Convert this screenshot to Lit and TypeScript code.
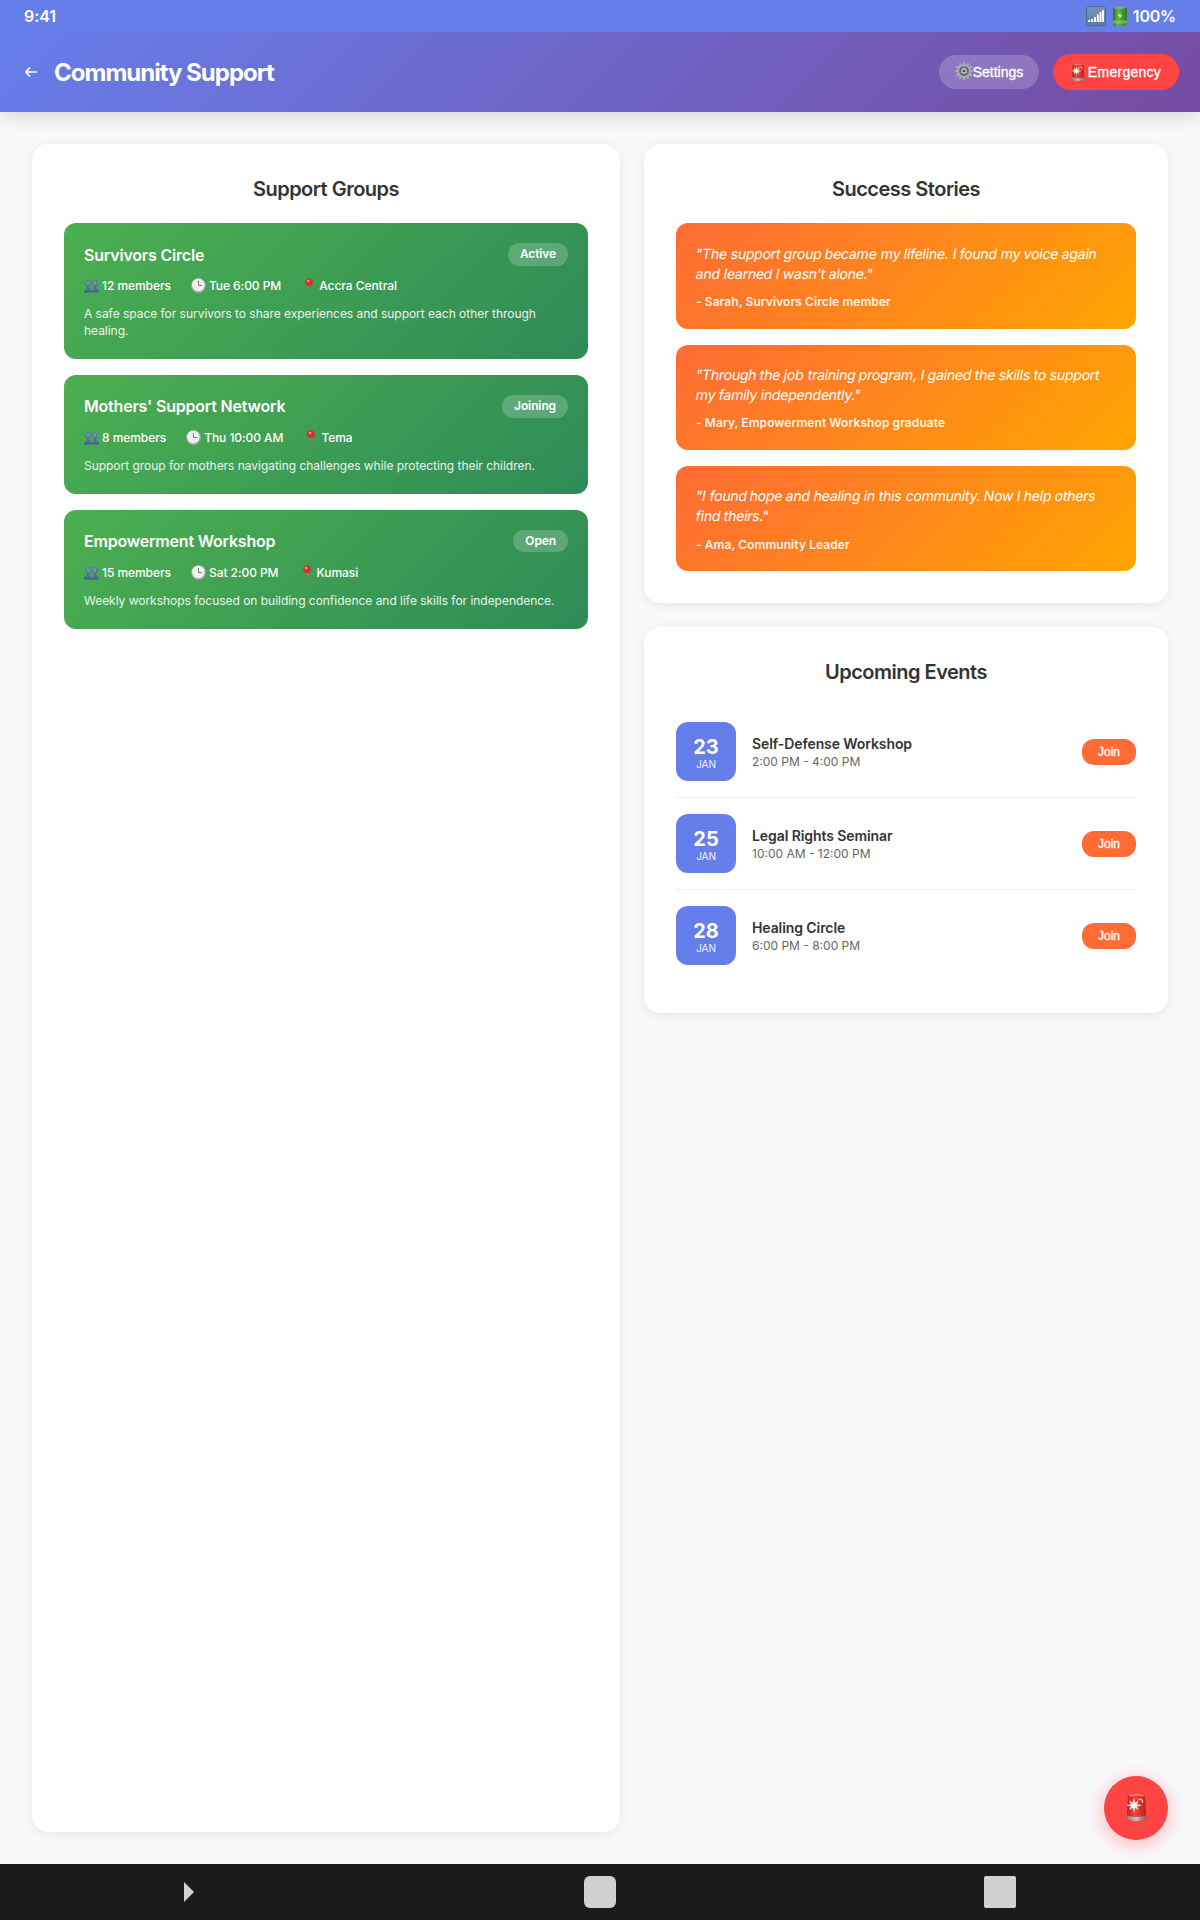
import { LitElement, html, css, svg } from "lit";
import { customElement } from "lit/decorators.js";

const groups = [
  { name: "Survivors Circle", status: "Active", members: "12 members", time: "Tue 6:00 PM", place: "Accra Central", text: "A safe space for survivors to share experiences and support each other through healing." },
  { name: "Mothers' Support Network", status: "Joining", members: "8 members", time: "Thu 10:00 AM", place: "Tema", text: "Support group for mothers navigating challenges while protecting their children." },
  { name: "Empowerment Workshop", status: "Open", members: "15 members", time: "Sat 2:00 PM", place: "Kumasi", text: "Weekly workshops focused on building confidence and life skills for independence." },
];
const stories = [
  { quote: "\"The support group became my lifeline. I found my voice again and learned I wasn't alone.\"", by: "- Sarah, Survivors Circle member" },
  { quote: "\"Through the job training program, I gained the skills to support my family independently.\"", by: "- Mary, Empowerment Workshop graduate" },
  { quote: "\"I found hope and healing in this community. Now I help others find theirs.\"", by: "- Ama, Community Leader" },
];
const events = [
  { day: "23", name: "Self-Defense Workshop", time: "2:00 PM - 4:00 PM" },
  { day: "25", name: "Legal Rights Seminar", time: "10:00 AM - 12:00 PM" },
  { day: "28", name: "Healing Circle", time: "6:00 PM - 8:00 PM" },
];

// Slants the upright face word by word, so that it keeps its two-storey "a".
const slanted = (text: string) => text.split(" ").map((w) => html`<span class="word">${w}</span> `);

const siren = (cls: string) => html`<svg class=${cls} viewBox="0 0 24 32">
  <defs><linearGradient id="dome" x1="0" x2="1"><stop offset="0" stop-color="#b0241c"/><stop offset=".4" stop-color="#ee4a3c"/><stop offset="1" stop-color="#bc2018"/></linearGradient>
  <linearGradient id="base" x1="0" x2="1"><stop offset="0" stop-color="#8a8280"/><stop offset=".5" stop-color="#c4c4c4"/><stop offset="1" stop-color="#6b6563"/></linearGradient></defs>
  <path d="M1 24h22v4q-3 4-11 4T1 28z" fill="url(#base)"/>
  <path d="M2 4.500Q2.500 1 12 1t10 3.500L23 25q-11 5-22 0z" fill="url(#dome)"/>
  <path d="M4 3.500q8-3 16 0" stroke="#f7a79c" stroke-width="1.200" fill="none"/>
  <path d="M14 8q5-3 5 3" stroke="#ffc2b8" stroke-width="1.500" fill="none"/>
  <path d="M9 7l1.300 4.500L14 9l-1.800 4 5.300 1-5.300 1.200 1.800 3.800-3.700-2.500L9 21.500l-1.300-5L4 19l1.800-3.800L1 14l4.800-1L4 9l3.700 2.500z" fill="#fff" stroke="#fff" stroke-width=".4" opacity=".93"/>
</svg>`;

const people = html`<svg class="emo" viewBox="0 0 15 15">
  <g fill="#4f7196"><ellipse cx="4" cy="5.500" rx="2.700" ry="3.600"/><path d="M0 14q0-3 3-4V8h2v2q2 1 2.300 4z"/><ellipse cx="11" cy="5.500" rx="2.700" ry="3.600"/><path d="M7.700 14q.3-3 2.300-4V8h2v2q3 1 3 4z"/></g>
  <g fill="#6d93b8"><ellipse cx="4.200" cy="5" rx="1.800" ry="2.600"/><ellipse cx="10.800" cy="5" rx="1.800" ry="2.600"/></g>
  <path d="M0 13h15v1.400H0z" fill="#3f5b92"/></svg>`;
const clock = html`<svg class="emo" viewBox="0 0 15 15">
  <circle cx="7.500" cy="7.500" r="7.400" fill="#a9a9a9"/><circle cx="7.300" cy="7" r="6.200" fill="#f1f1f1"/>
  <path d="M7.500 3v4.500h3.500" fill="none" stroke="#777" stroke-width="1"/></svg>`;
const pin = html`<svg class="emo" viewBox="0 0 15 15">
  <path d="M7.200 5h1.500l-.3 9h-.9z" fill="#98787a"/><circle cx="8" cy="4.300" r="3.800" fill="#dd2b25"/><circle cx="7.200" cy="3" r="1.300" fill="#ff9d90"/></svg>`;

const teeth = Array.from({ length: 12 }, (_, i) => svg`<path d="M8.200 0h1.600l.5 3h-2.600z" transform=${`rotate(${i * 30} 9 9)`} />`);
const gear = html`<svg class="gear" viewBox="0 0 18 18"><g fill="#aaadb0">${teeth}</g>
  <circle cx="9" cy="9" r="5.800" fill="none" stroke="#a9acaf" stroke-width="2"/><circle cx="9" cy="9" r="4.800" fill="#66676d"/>
  <path d="M9 9V4M9 9l4.500 2.500M9 9l-4.500 2.500" stroke="#909296" stroke-width="1"/><circle cx="9" cy="9" r="2.700" fill="#c3c5c7"/><circle cx="9" cy="9" r="1.300" fill="#44464d"/></svg>`;
const signal = html`<svg class="signal" viewBox="0 0 20 20">
  <defs><linearGradient id="sg" x2="0" y2="1"><stop stop-color="#7297b6"/><stop offset="1" stop-color="#5b7f9f"/></linearGradient></defs>
  <rect x=".5" y=".5" width="19" height="19" rx="2.500" fill="url(#sg)" stroke="#4d6f92"/>
  <path d="M2.200 14h2v2h-2zM5.100 13h2v3h-2zM8 11h2v5H8zM10.800 8.500h2V16h-2zM13.500 6h2v10h-2zM16.100 4H18v12h-1.900z" fill="#fff"/></svg>`;
const battery = html`<svg class="battery" viewBox="0 0 14 20">
  <defs><linearGradient id="bt"><stop stop-color="#2c7420"/><stop offset=".35" stop-color="#64b53a"/><stop offset="1" stop-color="#2b7d22"/></linearGradient></defs>
  <rect x="0" y="1" width="14" height="18.500" rx="2" fill="url(#bt)"/><ellipse cx="7" cy="1.700" rx="6" ry="1.300" fill="#8fa886"/>
  <path d="M0 14.500h14v3H0z" fill="#9bcf73" opacity=".6"/><path d="M7.600 6.500l-3 3.500h2L6.200 12.500l3.200-3.300H7.300z" fill="#d9f0c9"/></svg>`;

@customElement("app-root")
export class AppRoot extends LitElement {
  static styles = css`
    :host { display: block; font-family: Inter, "Liberation Sans", sans-serif; color: #333; }
    * { box-sizing: border-box; }
    .screen { width: 1200px; height: 1920px; display: flex; flex-direction: column; background: #f8f9fb; }
    .status { position: relative; z-index: 1; height: 32px; padding: 0 24px; display: flex; align-items: center; justify-content: space-between; background: #667eea; color: #fff; font-size: 16px; font-weight: 600; }
    .clock { letter-spacing: -.1px; }
    .power { display: flex; align-items: center; }
    .signal { width: 20px; height: 20px; margin-right: 7px; }
    .battery { width: 14px; height: 20px; margin-right: 6px; }
    .pct { letter-spacing: -.2px; }
    header { height: 80px; flex: none; padding: 0 21px 0 24px; display: flex; align-items: center; background: linear-gradient(135deg, #667eea 0%, #764ba2 100%); color: #fff; box-shadow: 0 4px 20px rgba(0,0,0,.15); position: relative; }
    .back { width: 14px; height: 14px; margin-right: 16px; }
    h1 { margin: 0; flex: 1; font-size: 24px; font-weight: 700; letter-spacing: -1px; line-height: 28px; padding-top: 2px; }
    .btn { border: 0; margin: 0; padding: 0; font: 500 14px "Liberation Sans", sans-serif; color: #fff; display: flex; align-items: center; justify-content: center; -webkit-text-stroke: .3px #fff; }
    .settings { width: 100px; height: 34px; border-radius: 17px; background: rgba(255,255,255,.2); margin-right: 14px; }
    .gear { width: 18px; height: 18px; margin-bottom: 2px; }
    .emergency { width: 126px; height: 36px; border-radius: 18px; background: #ff4444; letter-spacing: .28px; }
    .smallsiren { width: 14px; height: 18px; margin-right: 3px; }
    main { flex: 1; display: grid; grid-template-columns: 588px 524px; gap: 24px; padding: 32px; }
    .side { display: flex; flex-direction: column; gap: 24px; }
    .card { background: #fff; border-radius: 16px; padding: 32px; box-shadow: 0 2px 12px rgba(0,0,0,.08); }
    h2 { margin: 0 0 23.400px; height: 24px; line-height: 27px; text-align: center; font-size: 20px; font-weight: 600; letter-spacing: -.5px; }
    .list { display: flex; flex-direction: column; gap: 16px; }
    .group { border-radius: 12px; padding: 20px 20px 19px; background: linear-gradient(135deg, #4caf50 0%, #2e8b57 100%); color: #fff; }
    .top { display: flex; justify-content: space-between; align-items: center; height: 22.500px; margin-bottom: 12.300px; }
    .name { font-size: 16px; font-weight: 600; letter-spacing: -.2px; }
    .badge { font-size: 12px; font-weight: 600; letter-spacing: -.12px; line-height: 14.500px; padding: 4px 12px; border-radius: 12px; background: rgba(255,255,255,.2); }
    .meta { display: flex; gap: 20px; font-size: 12px; font-weight: 500; letter-spacing: -.06px; line-height: 15px; margin-bottom: 12.300px; }
    .item { display: flex; align-items: center; gap: 3px; }
    .emo { width: 15px; height: 15px; }
    .desc { font-size: 12px; line-height: 16.800px; opacity: .9; padding-top: 1px; letter-spacing: -.03px; }
    .story { border-radius: 12px; padding: 20px; height: 105.200px; background: linear-gradient(135deg, #ff6b35 0%, #ffa500 100%); color: #fff; }
    .quote { font-size: 14px; line-height: 19.600px; margin-bottom: 12px; padding-top: .7px; letter-spacing: -.24px; }
    .word { display: inline-block; transform: skewX(-10deg); }
    .by { font-size: 12px; font-weight: 600; line-height: 14.500px; opacity: .9; letter-spacing: .08px; }
    .event { display: flex; align-items: center; gap: 16px; padding: 16px 0; border-bottom: 1px solid #f0f0f0; }
    .event:last-child { border-bottom: 0; }
    .date { width: 60px; height: 59px; border-radius: 12px; background: #667eea; color: #fff; text-align: center; padding-top: 12.600px; }
    .day { font-size: 20px; font-weight: 700; line-height: 24px; }
    .month { font-size: 10px; line-height: 11px; opacity: .9; letter-spacing: -.1px; }
    .info { flex: 1; padding-top: 1px; }
    .title { font-size: 14px; font-weight: 600; line-height: 17px; margin-bottom: 3.500px; letter-spacing: -.09px; }
    .time { font-size: 12px; line-height: 14.500px; color: #666; }
    .join { width: 54px; height: 26px; border-radius: 12px; background: #ff6b35; font-size: 12px; }
    .fab { position: absolute; left: 1104px; top: 1776px; width: 64px; height: 64px; border-radius: 50%; background: #ff4444; display: flex; align-items: center; justify-content: center; box-shadow: 0 4px 20px rgba(255,68,68,.4); }
    .bigsiren { width: 21px; height: 28px; margin-bottom: 2px; }
    nav { height: 56px; flex: none; background: #1a1a1a; display: grid; grid-template-columns: 1fr 1fr 1fr; }
    nav div { display: flex; align-items: center; justify-content: center; }
    .tri { width: 32px; height: 20px; background: #d1d1d1; clip-path: polygon(0 0, 10px 10px, 0 20px); }
    .home { width: 32px; height: 32px; border-radius: 6px; background: #d1d1d1; }
    .recent { width: 32px; height: 32px; border-radius: 2px; background: #d1d1d1; }
  `;

  render() {
    return html`<div class="screen">
      <div class="status"><span class="clock">9:41</span><div class="power">${signal}${battery}<span class="pct">100%</span></div></div>
      <header>
        <svg class="back" viewBox="0 0 14 14"><path d="M12.200 7H2M5.500 3L1.800 7l3.700 4" fill="none" stroke="#fff" stroke-width="1.700" stroke-linecap="round" stroke-linejoin="round"/></svg>
        <h1>Community Support</h1>
        <button class="btn settings">${gear}<span>Settings</span></button>
        <button class="btn emergency">${siren("smallsiren")}<span>Emergency</span></button>
      </header>
      <main>
        <section class="card"><h2>Support Groups</h2><div class="list">
          ${groups.map((g) => html`<div class="group">
            <div class="top"><span class="name">${g.name}</span><span class="badge">${g.status}</span></div>
            <div class="meta"><span class="item">${people}<span>${g.members}</span></span><span class="item">${clock}<span>${g.time}</span></span><span class="item">${pin}<span>${g.place}</span></span></div>
            <div class="desc">${g.text}</div></div>`)}
        </div></section>
        <div class="side">
          <section class="card"><h2>Success Stories</h2><div class="list">
            ${stories.map((s) => html`<div class="story"><div class="quote">${slanted(s.quote)}</div><div class="by">${s.by}</div></div>`)}
          </div></section>
          <section class="card"><h2>Upcoming Events</h2><div>
            ${events.map((e) => html`<div class="event"><div class="date"><div class="day">${e.day}</div><div class="month">JAN</div></div>
              <div class="info"><div class="title">${e.name}</div><div class="time">${e.time}</div></div><button class="btn join">Join</button></div>`)}
          </div></section>
        </div>
      </main>
      <nav><div><span class="tri"></span></div><div><span class="home"></span></div><div><span class="recent"></span></div></nav>
      <div class="fab">${siren("bigsiren")}</div>
    </div>`;
  }
}
